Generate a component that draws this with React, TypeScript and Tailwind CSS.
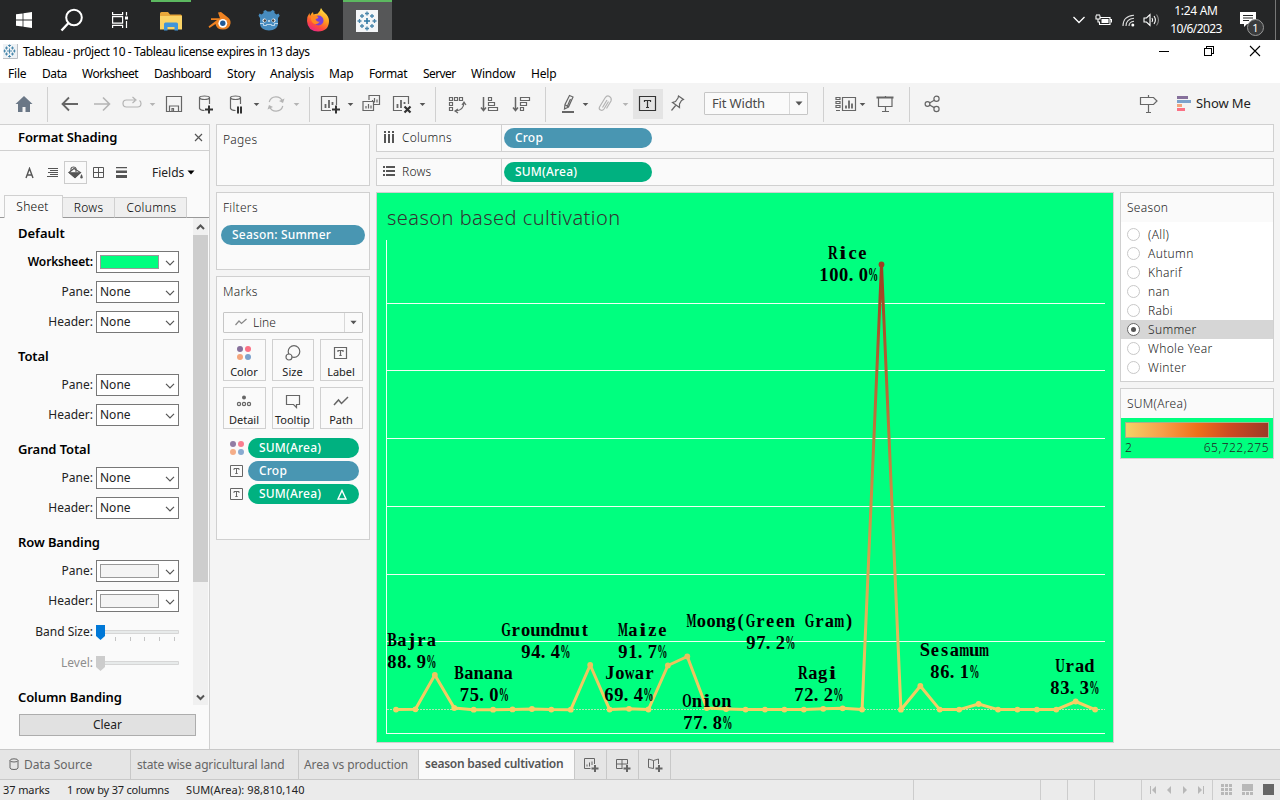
import React from "react";

type Kids = { children?: React.ReactNode };

const Ic = ({ cls = "", color = "text-[#666]", children }: Kids & { cls?: string; color?: string }) => (
  <svg viewBox="0 0 24 24" className={`mt-[9px] h-6 w-6 shrink-0 ${color} ${cls}`} fill="none" stroke="currentColor" strokeWidth="1.2">
    {children}
  </svg>
);

const Caret = ({ cls = "", color = "text-[#555]" }: { cls?: string; color?: string }) => (
  <svg viewBox="0 0 8 24" className={`mt-[9px] h-6 w-2 shrink-0 ${color} ${cls}`}>
    <path d="M1.700 11h5.600L4.500 14z" fill="currentColor" />
  </svg>
);

const Sep = ({ cls = "" }: { cls?: string }) => <div className={`mt-1 h-[35px] w-px shrink-0 bg-[#d0d0d0] ${cls}`} />;

const TableauMark = ({ size }: { size: string }) => (
  <svg viewBox="0 0 22 22" className={size}>
    <rect width="22" height="22" fill="#f4f6f8" />
    <g stroke="#4a86ab" strokeWidth="1.3">
      <path d="M11 8v6M8 11h6" strokeWidth="1.6" stroke="#2f77a3" />
      <path d="M11 1.500v4M9 3.500h4M11 16.500v4M9 18.500h4M3.500 9v4M1.500 11h4M18.500 9v4M16.500 11h4" />
      <path d="M6 4v4M4 6h4M16 4v4M14 6h4M6 14v4M4 16h4M16 14v4M14 16h4" />
    </g>
  </svg>
);

const SmallTableauMark = () => (
  <svg viewBox="0 0 15 15" className="h-[15px] w-[15px]">
    <path d="M0 0h14.500v14.500H0z" fill="#eef2f5" />
    <path d="M14.500 0v14.500H0" fill="none" stroke="#b9bec4" />
    <path d="M6.500 4.500v5M4 7h5M6.500 .500v2.500M5 1.500h3M6.500 11v2.500M5 12.500h3M1.500 5.500v3M.500 7H3M11.500 5.500v3M10 7h2.500M3.500 2.500v3M2 4h3M9.500 2.500v3M8 4h3M3.500 8.500v3M2 10h3M9.500 8.500v3M8 10h3" stroke="#3f81a8" strokeWidth="0.900" fill="none" />
  </svg>
);

const Slot = ({ cls = "", children }: Kids & { cls?: string }) => (
  <div className={`flex h-10 w-[49px] shrink-0 items-center justify-center ${cls}`}>{children}</div>
);

function Taskbar() {
  return (
    <div className="flex h-10 w-full shrink-0 bg-[#252627] text-white">
      <Slot cls="pr-[2px]">
        <svg viewBox="0 0 16 16" className="h-4 w-4" fill="#fff">
          <path d="M0 2.300 6.600 1.400V7.600H0zM7.400 1.300 16 0v7.600H7.400zM0 8.400h6.600v6.200L0 13.700zM7.400 8.400H16V16l-8.600-1.200z" />
        </svg>
      </Slot>
      <Slot cls="pr-1">
        <svg viewBox="0 0 24 24" className="h-6 w-6" fill="none" stroke="#fff" strokeWidth="2">
          <circle cx="14" cy="9.500" r="7.800" />
          <path d="M8.500 15 1.500 22.500" strokeWidth="2.400" />
        </svg>
      </Slot>
      <Slot cls="pr-[5px]">
        <svg viewBox="0 0 18 18" className="h-[18px] w-[18px]" fill="none" stroke="#fff" strokeWidth="1.200">
          <path d="M1.600 1v2.600h10V1M1.600 17v-2.600h10V17M1.600 5.600h10v6.600h-10zM15.500 1v3.500M15.500 10v7" />
          <path d="M14 5.500h3v3h-3z" fill="#fff" stroke="none" />
        </svg>
      </Slot>
      <Slot cls="flex-col pr-[2px]">
        <div className="h-[2px] w-10 bg-[#5cb860]" />
        <div className="flex flex-1 items-center">
          <svg viewBox="0 0 22 19" className="h-[19px] w-[22px]">
            <path d="M0 1.500Q0 0 1.500 0H8l2 2.500H20.500Q22 2.500 22 4V9H0z" fill="#e9a83a" />
            <path d="M0 4h22v13.500H0z" fill="#fbd467" />
            <path d="M4 18.500V12q0-1.500 1.500-1.500h11Q18 10.500 18 12v6.500h-3.500V15h-7v3.500z" fill="#3f95dc" />
          </svg>
        </div>
      </Slot>
      <Slot cls="pr-[2px]">
        <svg viewBox="0 0 24 20" className="mt-[2px] h-5 w-6">
          <path d="M10 1.500 13 1l7 5.500Q23 9 22.500 12.500 21.500 18.500 15 18.500 8.500 18.500 7.500 13L1.500 17 .500 15.500 9 9H3V7.300H12z" fill="#ee8222" />
          <circle cx="14.800" cy="12.300" r="4.400" fill="#fff" />
          <circle cx="14.800" cy="12.300" r="2.700" fill="#235a96" />
        </svg>
      </Slot>
      <Slot cls="pr-[2px]">
        <svg viewBox="0 0 22 22" className="h-[22px] w-[22px]">
          <path d="M7.500 1 9.500 2.500h3L14.500 1l2 1v2l2 1.500 2-1 1.200 2.200L20 9v6.500Q19 21 11 21.500 3 21 2 15.500V9L.500 6.700 1.500 4.500l2 1 2-1.500V2z" fill="#478cbf" />
          <path d="M2 14.500h3.500v2h3V15.500h5v1h3v-2H20" fill="none" stroke="#d8e8f4" strokeWidth="0.800" />
          <circle cx="6.500" cy="11.500" r="2" fill="#fff" />
          <circle cx="15.500" cy="11.500" r="2" fill="#fff" />
          <circle cx="6.800" cy="11.600" r="1.300" fill="#414042" />
          <circle cx="15.200" cy="11.600" r="1.300" fill="#414042" />
          <path d="M11 11v2" stroke="#fff" strokeWidth="1.200" />
        </svg>
      </Slot>
      <Slot cls="pr-[2px]">
        <svg viewBox="0 0 24 24" className="h-6 w-6">
          <defs>
            <linearGradient id="fx" x1="0.800" y1="0" x2="0.300" y2="1">
              <stop offset="0" stopColor="#ffe84a" />
              <stop offset="0.450" stopColor="#ff9a1f" />
              <stop offset="0.750" stopColor="#ff4a3c" />
              <stop offset="1" stopColor="#e8258a" />
            </linearGradient>
          </defs>
          <path d="M15 0q1.500 3 4 5 4 3.500 4 8 0 10-11 10.500Q1.500 23 1 13 1 8 3.500 5L4 8q1-2.500 3-4l.500 2.500q2-1 4-.800Q14 4 15 0z" fill="url(#fx)" />
          <circle cx="12.500" cy="12.500" r="5" fill="#7a3fd6" />
          <path d="M5 8.500q3-2 7.500.500-.500 2-3 2 1 3.500 4.500 2.500-3 4-6.500 2Q4.500 13.500 5 8.500z" fill="#ff8a22" />
        </svg>
      </Slot>
      <Slot cls="w-[48px] flex-col bg-[#565758]">
        <div className="h-[2px] w-full bg-[#5cb860]" />
        <div className="flex flex-1 items-center pr-px">
          <TableauMark size="h-[22px] w-[22px]" />
        </div>
      </Slot>
      <div className="ml-auto flex h-10 items-center">
        <svg viewBox="0 0 12 8" className="h-2 w-3" fill="none" stroke="#fff" strokeWidth="1.300">
          <path d="M.500 1 6 6.500 11.500 1" />
        </svg>
        <svg viewBox="0 0 17 12" className="ml-[10px] h-3 w-[17px]" fill="none" stroke="#fff" strokeWidth="1.100">
          <path d="M5.500 3.500h9.500v7H4.500V8M15.500 5.500h1v3M1 1.500v3.500h4V1.500M2 0v2M4 0v2M3 5v3h2" />
          <path d="M6.500 5h7v4h-7z" fill="#fff" stroke="none" />
        </svg>
        <svg viewBox="0 0 13 13" className="ml-[10px] h-[13px] w-[13px]" fill="none" stroke="#ddd" strokeWidth="1.100">
          <path d="M1 12Q1 2 12 1.200M4 12Q4 5 12 4.200M7 12Q7 8 12 7.300" />
          <circle cx="10.800" cy="11" r="1.500" fill="#fff" stroke="none" />
        </svg>
        <svg viewBox="0 0 17 14" className="ml-2 h-[14px] w-[17px]" fill="none" stroke="#fff" strokeWidth="1.100">
          <path d="M1 5h2.500L7 1.500v11L3.500 9H1zM9 5q1.300 2 0 4M11 3q2.800 4 0 8" />
          <path d="M13.500 1.500q4 5.500 0 11" stroke="#888" />
        </svg>
        <div className="ml-[7px] flex w-[58px] flex-col items-center whitespace-nowrap text-[12px] leading-[18px]">
          <span className="tracking-[-0.3px]">1:24 AM</span>
          <span className="tracking-[-0.6px]">10/6/2023</span>
        </div>
        <svg viewBox="0 0 26 26" className="ml-[14px] mt-2 h-[26px] w-[26px]">
          <path d="M1 1h16v12H8l-3 3v-3H1z" fill="#fff" />
          <path d="M4 4.500h10M4 7h10M4 9.500h6" stroke="#252627" />
          <circle cx="16.500" cy="16.500" r="8" fill="#3a3b3c" stroke="#999" />
          <text x="16.500" y="20.500" textAnchor="middle" fontSize="11" fill="#fff">1</text>
        </svg>
        <div className="ml-[10px] mr-1 h-10 w-px bg-[#777]" />
      </div>
    </div>
  );
}

function TitleBar() {
  return (
    <div className="flex h-[23px] w-full shrink-0 items-center bg-white pl-[3px] text-[12px] text-black">
      <SmallTableauMark />
      <span className="ml-[5px] whitespace-nowrap tracking-[-0.39px]">Tableau - pr0ject 10 - Tableau license expires in 13 days</span>
      <svg viewBox="0 0 102 12" className="-mt-[2px] ml-auto mr-[19px] h-3 w-[102px]" fill="none" stroke="#000" shapeRendering="crispEdges">
        <path d="M0 6.500h10M45.500 3.500h7v7h-7zM47.500 3V1.500h7v7H53" />
        <path d="M91 1l10 10M101 1 91 11" shapeRendering="auto" strokeWidth="1.100" />
      </svg>
    </div>
  );
}

function MenuBar() {
  return (
    <div className="flex h-5 w-full shrink-0 items-center bg-white pl-2 pt-[2px] text-[12px] tracking-[-0.2px] text-black">
      <span className="w-[34px]">File</span>
      <span className="w-[40px] tracking-[-0.4px]">Data</span>
      <span className="w-[72px] tracking-[-0.5px]">Worksheet</span>
      <span className="w-[73px] tracking-[-0.55px]">Dashboard</span>
      <span className="w-[43px]">Story</span>
      <span className="w-[59px]">Analysis</span>
      <span className="w-[40px]">Map</span>
      <span className="w-[54px] tracking-[-0.45px]">Format</span>
      <span className="w-[48px] tracking-[-0.6px]">Server</span>
      <span className="w-[60px]">Window</span>
      <span>Help</span>
    </div>
  );
}

const TBox = () => (
  <>
    <path d="M3.500 4.500h16v14h-16z" />
    <path d="M8.500 10V8.500h6V10M11.500 8.500v7M10 15.500h3" />
  </>
);

function Toolbar() {
  return (
    <div className="flex h-[41px] w-full shrink-0 items-start bg-[#f4f4f4]">
      <Ic cls="ml-3">
        <path d="M12 4 3.500 12H6v8h4.500v-5h3v5H18v-8h2.500z" fill="#6a7786" stroke="none" />
      </Ic>
      <Sep cls="ml-[11px]" />
      <Ic cls="ml-[10px]"><path d="M20 12H5M11 5.500 4.500 12l6.500 6.500" strokeWidth="1.800" /></Ic>
      <Ic cls="ml-2" color="text-[#b4b4b4]"><path d="M4 12h15M13 5.500 19.500 12 13 18.500" strokeWidth="1.600" /></Ic>
      <Ic cls="ml-[6px]" color="text-[#b4b4b4]">
        <path d="M15 8H6.500Q3 8 3 11.500T6.500 15h11q3.500 0 3.500-3.500 0-2-1.500-3M12.500 5l3.500 3-3.500 3" />
      </Ic>
      <Caret cls="ml-1" color="text-[#b4b4b4]" />
      <Ic cls="ml-[6px]"><path d="M4.500 4.500h15v15h-15zM7.500 19v-5h9v5M10 19v-2.500h1.500V19" /></Ic>
      <Ic cls="ml-2">
        <path d="M5.500 5.500v11q1 2 5 2M15.500 5.500V12M5.500 5.500Q6 4 10.500 4t5 1.500Q15 7.500 10.500 7.500t-5-2z" />
        <path d="M15 13.500v8M11 17.500h8" strokeWidth="2" stroke="#333" />
      </Ic>
      <Ic cls="ml-[7px]">
        <path d="M5.500 5.500v11q1 2 5 2M15.500 5.500V12M5.500 5.500Q6 4 10.500 4t5 1.500Q15 7.500 10.500 7.500t-5-2z" />
        <path d="M13 14.500v7M16 14.500v7" strokeWidth="2" stroke="#333" />
      </Ic>
      <Caret cls="ml-[3px]" />
      <Ic cls="ml-1" color="text-[#b4b4b4]">
        <path d="M5.200 10A7 7 0 0 1 18.500 9.500M18.800 14A7 7 0 0 1 5.500 14.500" />
        <path d="M20.500 6.500 19 11l-4-2zM3.500 17.500 5 13l4 2z" fill="currentColor" stroke="none" />
      </Ic>
      <Caret cls="ml-1" color="text-[#b4b4b4]" />
      <Sep cls="ml-[9px]" />
      <Ic cls="ml-2">
        <path d="M13 18.500H3.500v-14h15V13" />
        <path d="M7.500 16v-4M11 16V8M14.500 13v-3" strokeWidth="1.800" />
        <path d="M18 13.500v8M14 17.500h8" strokeWidth="2" stroke="#333" />
      </Ic>
      <Caret cls="ml-1" />
      <Ic cls="ml-[5px]">
        <path d="M10 8V3.500h10.500v9H15M4 9.500h10.500v9H4z" />
        <path d="M7 16.500V14M9.500 16.500V12M12 16.500v-3M13.500 10V8M15.500 10.500V6M18 10.500v-3" />
      </Ic>
      <Ic cls="ml-[7px]">
        <path d="M12 18.500H3.500v-14h15V12" />
        <path d="M7.500 16v-4M11 16V8M14.500 12v-2" strokeWidth="1.800" />
        <path d="M14.500 14.500l6 6M20.500 14.500l-6 6" strokeWidth="2.200" stroke="#333" />
      </Ic>
      <Caret cls="ml-1" />
      <Sep cls="ml-[9px]" />
      <Ic cls="ml-[9px]">
        <path d="M4.500 5.500h3v3h-3zM9.500 5.500h3v3h-3zM14.500 5.500h3v3h-3zM4.500 10.500h3v3h-3zM4.500 15.500h3v3h-3z" />
        <path d="M11 19q7.500-1 8-8M17 13l2-3 2 3M13 17l-3 2 3 2" />
      </Ic>
      <Ic cls="ml-[9px]">
        <path d="M5.500 5v13M3 15.500l2.500 3 2.500-3" strokeWidth="1.500" />
        <path d="M10.500 5.500h3v3h-3zM10.500 10.500h6v3h-6zM10.500 15.500h9v3h-9z" />
      </Ic>
      <Ic cls="ml-2">
        <path d="M5.500 5v13M3 15.500l2.500 3 2.500-3" strokeWidth="1.500" />
        <path d="M10.500 5.500h9v3h-9zM10.500 10.500h6v3h-6zM10.500 15.500h3v3h-3z" />
      </Ic>
      <Sep cls="ml-[11px]" />
      <Ic cls="ml-[10px]">
        <path d="M13.500 3.500 17 5l-4.500 10-4 2 .500-4.500zM9.500 13l3.500 2M11 15l3.500-8" />
        <path d="M6 20h12" strokeWidth="2" />
      </Ic>
      <Caret cls="ml-px" />
      <Ic cls="ml-1" color="text-[#b4b4b4]">
        <path d="M15.500 9.500 11 17q-1.500 2-3.500 1T6.500 15L12 6q2-3 4.500-1.500T18 9l-4.500 7.500M14 8l-4.500 7.500" />
      </Ic>
      <Caret cls="ml-1" color="text-[#b4b4b4]" />
      <div className="ml-1 mt-[6px] flex h-[30px] w-[30px] shrink-0 justify-center bg-[#e4e4e4]">
        <svg viewBox="0 0 24 24" className="mt-[3px] h-6 w-6" fill="none" stroke="#333" strokeWidth="1.200"><TBox /></svg>
      </div>
      <Ic cls="ml-[2px]">
        <path d="M13.500 4l5 3.500-2 1-2 3.500 0 3.500-7-5 3-1 2.500-3.500zM11 13 6.500 18.500" />
      </Ic>
      <div className="ml-[15px] mt-[9px] flex h-[23px] w-[104px] shrink-0 rounded-[1px] border border-[#c6c6c6] bg-[#fafafa] text-[13px] leading-[21px] text-[#4a4a4a]">
        <span className="flex-1 pl-[7px] tracking-[-0.15px]">Fit Width</span>
        <div className="flex w-[18px] items-center justify-center border-l border-[#d8d8d8]">
          <svg viewBox="0 0 8 5" className="h-[5px] w-2"><path d="M0.500 0.500h7L4 4.500z" fill="#555" /></svg>
        </div>
      </div>
      <Sep cls="ml-[15px]" />
      <Ic cls="ml-[9px]">
        <path d="M3 5.500h4v2H3zM3 9.500h4v2H3zM3 13.500h4v2H3zM3 18.500h4M9.500 5.500h13v13h-13z" />
        <path d="M13 16.500v-3M16 16.500v-8M19 16.500v-5" strokeWidth="1.800" />
      </Ic>
      <Caret cls="ml-px" />
      <Ic cls="ml-[7px]">
        <path d="M3.500 5.500h17" strokeWidth="2" />
        <path d="M5.500 6v8.500h13.500V6M12.500 15v4M9 19.500h7M12.500 4v1" />
      </Ic>
      <Sep cls="ml-3" />
      <Ic cls="ml-[10px]">
        <circle cx="7.500" cy="12" r="2.400" /><circle cx="16.500" cy="6.800" r="2.600" /><circle cx="16.500" cy="17" r="2.600" />
        <path d="M9.500 11l4.800-2.800M9.500 13l4.800 2.600" />
      </Ic>
      <Ic cls="ml-auto">
        <path d="M4.500 5.500h13l3.500 3.500-3.500 3.500h-13zM12.500 3v2.500M12.500 12.500V20M10 20.500h5" />
      </Ic>
      <svg viewBox="0 0 16 16" className="ml-[16px] mt-[13px] h-4 w-4 shrink-0">
        <path d="M1 0h11v3H1z" fill="#86709b" /><path d="M1 4h14v3H1z" fill="#7ca2cc" />
        <path d="M1 8h5v3H1z" fill="#f2a57c" /><path d="M1 12h8v3H1z" fill="#fb7185" />
      </svg>
      <span className="ml-1 mt-[10px] w-[84px] text-[13px] leading-[21px] tracking-[-0.1px] text-[#222]">Show Me</span>
    </div>
  );
}

const Combo = ({ fill }: { fill?: string }) => (
  <div className="flex h-[22px] w-[83px] items-center border border-[#777] bg-white pl-[3px] text-[12px] text-[#222]">
    {fill ? <div className={`h-[14px] w-[59px] border border-[#999] ${fill}`} /> : <span className="w-[59px]">None</span>}
    <svg viewBox="0 0 10 6" className="ml-[6px] mt-px h-[6px] w-[10px]" fill="none" stroke="#555" strokeWidth="1.200">
      <path d="M1 .800 5 4.800 9 .800" />
    </svg>
  </div>
);

const Field = ({ label, fill, bold = "" }: { label: string; fill?: string; bold?: string }) => (
  <div className="flex h-[30px] shrink-0 items-center">
    <span className={`w-[93px] text-right text-[12px] ${bold}`}>{label}</span>
    <div className="ml-[3px]"><Combo fill={fill} /></div>
  </div>
);

const Head = ({ children }: Kids) => (
  <div className="flex h-[33px] shrink-0 items-center pl-[18px] pt-[7px] text-[13px] font-semibold tracking-[-0.1px] text-black">{children}</div>
);

function FormatPane() {
  return (
    <div className="flex h-full w-[210px] shrink-0 flex-col border-r border-t border-[#d0d0d0] bg-[#fafafa] text-[#222]">
      <div className="flex h-[26px] shrink-0 items-center justify-between border-b border-[#d0d0d0] pl-[18px] pr-[6px]">
        <span className="text-[13px] font-semibold tracking-[-0.1px] text-black">Format Shading</span>
        <svg viewBox="0 0 9 9" className="-mt-px h-[9px] w-[9px]" stroke="#555" strokeWidth="1.200"><path d="M1 1l7 7M8 1 1 8" /></svg>
      </div>
      <div className="flex h-[44px] shrink-0 items-center pb-px pl-[24px]">
        <svg viewBox="0 0 11 12" className="h-3 w-[11px]" fill="none" stroke="#555" strokeWidth="1.400"><path d="M2 11 5.500 1.500 9 11M3.200 8h4.600" /></svg>
        <svg viewBox="0 0 11 11" className="ml-[12px] h-[11px] w-[11px]" stroke="#555"><path d="M1 1.500h10M3 3.500h8M1 5.500h10M3 7.500h8M0 9.500h11" /></svg>
        <div className="ml-[6px] flex h-[23px] w-[23px] items-center justify-center border border-[#ccc]">
          <svg viewBox="0 0 15 14" className="h-[14px] w-[15px]" fill="none" stroke="#555" strokeWidth="1.100">
            <path d="M1 6.500 6 2.500l6.500 4-5.500 5z" /><path d="M1.500 6.800h10.500L7 11.500z" fill="#555" />
            <path d="M3 5V2.500Q3.500 1 5.500 1T8 2.500V6" /><path d="M13.500 8q2.300 4 0 4.500-2.300-.500 0-4.500z" fill="#555" stroke="none" />
          </svg>
        </div>
        <svg viewBox="0 0 11 11" className="ml-[6px] h-[11px] w-[11px]" fill="none" stroke="#555"><path d="M.500.500h10v10H.500zM5.500 0v11M0 5.500h11" /></svg>
        <svg viewBox="0 0 11 11" className="ml-[12px] h-[11px] w-[11px]" fill="#555"><path d="M0 0h11v1.200H0zM0 3.500h11v2.500H0zM0 8h11v3H0z" /></svg>
        <span className="ml-[25px] w-[32px] whitespace-nowrap text-[12px]">Fields</span>
        <svg viewBox="0 0 8 5" className="ml-[3px] h-[5px] w-2"><path d="M.500.500h7L4 4.500z" fill="#000" /></svg>
      </div>
      <div className="flex h-[23px] shrink-0 items-end text-[12px] font-light text-black">
        <div className="h-full w-1 border-b border-[#999]" />
        <div className="flex h-full w-[59px] items-center justify-center border-x border-t border-[#d0d0d0] pr-[2px] tracking-[0.25px]">Sheet</div>
        <div className="flex h-[21px] w-[52px] items-center justify-center border-b border-r border-t border-[#d0d0d0] border-b-[#999] bg-[#efefef] tracking-[0.3px]">Rows</div>
        <div className="flex h-[21px] w-[72px] items-center justify-center border-b border-r border-t border-[#d0d0d0] border-b-[#999] bg-[#efefef] pl-[2px] tracking-[0.3px]">Columns</div>
        <div className="h-full flex-1 border-b border-[#999]" />
      </div>
      <div className="flex h-[487px] shrink-0 overflow-hidden">
        <div className="flex w-[193px] flex-col overflow-hidden">
          <div className="flex h-[29px] shrink-0 items-center pl-[18px] pt-[2px] text-[13px] font-semibold text-black">Default</div>
          <Field label="Worksheet:" fill="bg-[#00ff7f]" bold="font-semibold text-black tracking-[-0.15px]" />
          <Field label="Pane:" /><Field label="Header:" />
          <Head>Total</Head>
          <Field label="Pane:" /><Field label="Header:" />
          <Head>Grand Total</Head>
          <Field label="Pane:" /><Field label="Header:" />
          <Head>Row Banding</Head>
          <Field label="Pane:" fill="bg-[#f4f4f4]" /><Field label="Header:" fill="bg-[#f4f4f4]" />
          <div className="flex h-[31px] shrink-0 items-center">
            <span className="w-[93px] text-right text-[12px]">Band Size:</span>
            <svg viewBox="0 0 83 17" className="ml-[3px] mt-[2px] h-[17px] w-[83px]">
              <path d="M1 6.500h81.500v3H1z" fill="#e7eaea" stroke="#d6d6d6" />
              <path d="M19.500 13v4M34.500 13v4M48.500 13v4M63.500 13v4M78.500 13v4" stroke="#c4c4c4" />
              <path d="M0 1h9v11l-4.500 4L0 12z" fill="#0078d7" />
            </svg>
          </div>
          <div className="flex h-[31px] shrink-0 items-center text-[#8d8d8d]">
            <span className="w-[93px] text-right text-[12px]">Level:</span>
            <svg viewBox="0 0 83 17" className="ml-[3px] mt-[2px] h-[17px] w-[83px]">
              <path d="M1 6.500h81.500v3H1z" fill="#e7eaea" stroke="#d6d6d6" />
              <path d="M0 1h9v11l-4.500 4L0 12z" fill="#ccc" />
            </svg>
          </div>
          <Head>Column Banding</Head>
        </div>
        <div className="flex w-[15px] flex-col items-center bg-[#f0f0f0]">
          <svg viewBox="0 0 9 17" className="h-[17px] w-[9px]" fill="none" stroke="#555" strokeWidth="2"><path d="M1 11 4.500 7.500 8 11" /></svg>
          <div className="h-[347px] w-full bg-[#cdcdcd]" />
          <svg viewBox="0 0 9 17" className="mt-auto h-[17px] w-[9px]" fill="none" stroke="#555" strokeWidth="2"><path d="M1 7.500 4.500 11 8 7.500" /></svg>
        </div>
      </div>
      <div className="ml-[19px] mt-[9px] flex h-[22px] w-[177px] shrink-0 items-center justify-center border border-[#adadad] bg-[#e1e1e1] text-[12px]">Clear</div>
    </div>
  );
}

const Pill = ({ cls, children }: Kids & { cls: string }) => (
  <div className={`flex h-5 shrink-0 items-center rounded-full pl-[11px] text-[12px] font-medium tracking-[0.2px] text-white ${cls}`}>{children}</div>
);

const MarkBtn = ({ label, cls = "w-[43px]", children }: Kids & { label: string; cls?: string }) => (
  <div className={`flex h-[42px] shrink-0 flex-col items-center border border-[#d0d0d0] bg-[#fafafa] pr-px text-[11px] text-[#222] ${cls}`}>
    <svg viewBox="0 0 16 16" className="mt-[5px] h-4 w-4 shrink-0" fill="none" stroke="#666" strokeWidth="1.200">{children}</svg>
    <span className="mt-[4px] whitespace-nowrap leading-[14px]">{label}</span>
  </div>
);

const Dots = () => (
  <g stroke="none">
    <circle cx="4" cy="4" r="3" fill="#86709b" /><circle cx="12" cy="4" r="3" fill="#fb7185" />
    <circle cx="4" cy="12" r="3" fill="#f4a57c" /><circle cx="12" cy="12" r="3" fill="#7ca2cc" />
  </g>
);

const SmallT = () => <path d="M1.500 2.500h12v11h-12zM5 7V5.500h5V7M7.500 5.500v5M6.300 10.500h2.400" />;

const card = "flex shrink-0 flex-col border border-[#d0d0d0] bg-[#fafafa]";
const cardTitle = "pl-[6px] pt-[6px] text-[12px] leading-[18px] font-light tracking-[0.3px] text-[#222]";

function Cards() {
  return (
    <div className="ml-[6px] flex w-[154px] shrink-0 flex-col gap-[6px]">
      <div className={`${card} h-[62px]`}><span className={cardTitle}>Pages</span></div>
      <div className={`${card} h-[78px]`}>
        <span className={cardTitle}>Filters</span>
        <Pill cls="ml-1 mt-2 w-[144px] bg-[#4996b2]">Season: Summer</Pill>
      </div>
      <div className={`${card} h-[264px] pl-[6px]`}>
        <span className="pt-[6px] text-[12px] font-light leading-[18px] tracking-[0.3px] text-[#222]">Marks</span>
        <div className="mt-[11px] flex h-[21px] w-[140px] shrink-0 items-center rounded-[1px] border border-[#c6c6c6] bg-[#fafafa] text-[12px] font-light text-[#222]">
          <svg viewBox="0 0 12 8" className="-mt-[2px] ml-[11px] h-2 w-3" fill="none" stroke="#888" strokeWidth="1.200"><path d="M.500 7 4 3l2.500 2.500L11.500 1" /></svg>
          <span className="ml-[6px] flex-1">Line</span>
          <div className="flex h-full w-[18px] items-center justify-center border-l border-[#d8d8d8]">
            <svg viewBox="0 0 8 5" className="h-[5px] w-[7px]"><path d="M.500.500h7L4 4.500z" fill="#555" /></svg>
          </div>
        </div>
        <div className="mt-[6px] flex gap-[6px]">
          <MarkBtn label="Color"><Dots /></MarkBtn>
          <MarkBtn label="Size" cls="w-[42px]"><circle cx="9" cy="6.500" r="5.800" /><circle cx="4" cy="12" r="3" fill="#fafafa" /></MarkBtn>
          <MarkBtn label="Label"><SmallT /></MarkBtn>
        </div>
        <div className="mt-[6px] flex gap-[6px]">
          <MarkBtn label="Detail"><circle cx="8" cy="4.500" r="2" fill="#666" stroke="none" /><circle cx="3" cy="11" r="1.600" /><circle cx="8" cy="11" r="1.600" /><circle cx="13" cy="11" r="1.600" /></MarkBtn>
          <MarkBtn label="Tooltip" cls="w-[42px]"><path d="M1.500 2.500h13v9h-3v3l-3-3h-7z" /></MarkBtn>
          <MarkBtn label="Path"><path d="M1 12 5.500 7l3 3.500L15 4" strokeWidth="1.500" /></MarkBtn>
        </div>
        <div className="mt-[9px] flex flex-col gap-[3px] pl-[6px]">
          <div className="flex items-center"><svg viewBox="0 0 16 16" className="h-4 w-4" opacity="0.900"><Dots /></svg><Pill cls="ml-[3px] w-[111px] bg-[#00b180]">SUM(Area)</Pill></div>
          <div className="flex items-center"><svg viewBox="0 0 16 16" className="h-4 w-4" fill="none" stroke="#666"><SmallT /></svg><Pill cls="ml-[3px] w-[111px] bg-[#4996b2]">Crop</Pill></div>
          <div className="flex items-center">
            <svg viewBox="0 0 16 16" className="h-4 w-4" fill="none" stroke="#666"><SmallT /></svg>
            <Pill cls="ml-[3px] w-[111px] justify-between bg-[#00b180] pr-3">
              SUM(Area)
              <svg viewBox="0 0 10 11" className="h-[11px] w-[10px]" fill="none" stroke="#fff" strokeWidth="1.400"><path d="M1 10 5 1.500 9 10z" /></svg>
            </Pill>
          </div>
        </div>
      </div>
    </div>
  );
}

const Shelf = ({ label, pill, icon, tone }: { label: string; pill: string; icon: React.ReactNode; tone: string }) => (
  <div className="flex h-7 shrink-0 items-center border border-[#d0d0d0] bg-[#fafafa]">
    <div className="flex h-full w-[125px] items-center border-r border-[#d0d0d0] pl-[6px] text-[12px] font-light tracking-[0.25px] text-[#222]">
      <svg viewBox="0 0 12 12" className="-mt-[2px] h-3 w-3" fill="#555">{icon}</svg>
      <span className="ml-[7px]">{label}</span>
    </div>
    <Pill cls={`ml-[2px] w-[148px] ${tone}`}>{pill}</Pill>
  </div>
);

const ys = [
  709.6, 709.3, 675, 708, 709.7, 709.7, 709.4, 709, 709.6, 709.7, 665, 709.6, 708.8, 709.5, 665.5, 656.5, 708, 709, 709.6,
  709.6, 709.6, 709.6, 708.8, 708.3, 709.6, 264.5, 709.7, 686, 709.6, 709.6, 704, 709.6, 709.6, 709.6, 709.6, 701.5, 709.6,
];
const px = (i: number) => 396 + i * 19.42;

const labels: [string, number, number][] = [
  ["Bajra", 387, 646], ["88.9%", 387, 668], ["Banana", 454, 679], ["75.0%", 459.5, 701],
  ["Groundnut", 501, 636], ["94.4%", 521, 658], ["Maize", 618, 636], ["91.7%", 618, 658],
  ["Jowar", 605, 679], ["69.4%", 604, 701], ["Moong(Green Gram)", 686.5, 627], ["97.2%", 746, 649],
  ["Onion", 682, 707], ["77.8%", 683, 729], ["Rice", 828, 259], ["100.0%", 819, 281],
  ["Ragi", 798, 679], ["72.2%", 794, 701], ["Sesamum", 920, 656], ["86.1%", 930, 678],
  ["Urad", 1055, 672], ["83.3%", 1050, 694],
];

const cell = 9.85;
const stretched: Record<string, number> = { m: 10, M: 10, G: 9.6, O: 9.4, U: 9.6, R: 9.8, "%": 10.2, w: 9.8, i: 7, r: 8.4, j: 7, B: 9.6 };

const MonoLabel = ({ text, x, y }: { text: string; x: number; y: number }) => (
  <text y={y} textAnchor="middle">
    {text.split("").map((c, i) => {
      const cx = x + cell / 2 + i * cell - (c === "." ? 2.500 : 0);
      const w = stretched[c];
      return w ? (
        <tspan key={i} x={cx} textLength={w} lengthAdjust="spacingAndGlyphs">{c}</tspan>
      ) : (
        <tspan key={i} x={cx}>{c}</tspan>
      );
    })}
  </text>
);

function Chart() {
  return (
    <div className="flex h-[551px] w-[738px] shrink-0 flex-col border border-[#d0d0d0] bg-[#00ff7f]">
      <div className="h-[46px] shrink-0 pl-[10px] pt-[11px] text-[20px] font-light leading-[28px] tracking-[0.46px] text-[#333]">season based cultivation</div>
      <svg viewBox="377 239 736 503" className="h-[503px] w-[736px] overflow-visible">
        <defs>
          <linearGradient id="heat" gradientUnits="userSpaceOnUse" x1="0" y1="264" x2="0" y2="709">
            <stop offset="0" stopColor="#9e3d22" />
            <stop offset="1" stopColor="#f4d166" />
          </linearGradient>
        </defs>
        <path d="M386 303.500h719M386 370.500h719M386 438.500h719M386 506.500h719M386 574.500h719M386 641.500h719M386.500 240v493.500M386 733.500h719" stroke="#f0fff4" fill="none" />
        <path d="M387 709.500h718" stroke="#b5e8b0" strokeDasharray="2 1" />
        <polyline points={ys.map((y, i) => `${px(i)},${y}`).join(" ")} fill="none" stroke="url(#heat)" strokeWidth="3" strokeLinejoin="round" />
        {ys.map((y, i) => <circle key={i} cx={px(i)} cy={y} r="2.900" fill="url(#heat)" />)}
        <g fill="#000" fontSize="18.500" fontWeight="bold" fontFamily='"Liberation Serif", serif'>
          {labels.map(([t, x, y], i) => <MonoLabel key={i} text={t} x={x} y={y} />)}
        </g>
      </svg>
    </div>
  );
}

function Legends() {
  const seasons = ["(All)", "Autumn", "Kharif", "nan", "Rabi", "Summer", "Whole Year", "Winter"];
  return (
    <div className="flex w-[154px] shrink-0 flex-col gap-[6px]">
      <div className={`${card} h-[190px]`}>
        <span className={`${cardTitle} h-[29px] shrink-0`}>Season</span>
        <div className="flex flex-1 flex-col bg-white pt-[3px]">
          {seasons.map((s) => (
            <div key={s} className={`flex h-[19px] items-center pl-[6px] text-[12px] font-light tracking-[0.35px] text-[#222] ${s === "Summer" ? "bg-[#d6d6d6]" : ""}`}>
              <div className={`flex h-[13px] w-[13px] items-center justify-center rounded-full border bg-white ${s === "Summer" ? "border-[#666]" : "border-[#c8c8c8]"}`}>
                {s === "Summer" && <div className="h-[5px] w-[5px] rounded-full bg-[#555]" />}
              </div>
              <span className="ml-2">{s}</span>
            </div>
          ))}
        </div>
      </div>
      <div className={`${card} h-[71px]`}>
        <span className={`${cardTitle} h-[29px] shrink-0`}>SUM(Area)</span>
        <div className="flex flex-1 flex-col bg-[#00ff7f] px-1 pt-[4px]">
          <div className="h-4 border border-[#a5b08a] bg-[linear-gradient(to_right,#f4d166,#f8a04a_25%,#ef701b_50%,#cf4c22_72%,#9e3a26)]" />
          <div className="flex justify-between text-[12px] font-light leading-[19px] tracking-[0.5px] text-[#222]"><span>2</span><span>65,722,275</span></div>
        </div>
      </div>
    </div>
  );
}

const AddTab = ({ children }: Kids) => (
  <div className="flex h-full w-8 shrink-0 items-center justify-center border-r border-[#c8c8c8]">
    <svg viewBox="0 0 16 16" className="h-4 w-4" fill="none" stroke="#666">
      {children}
      <path d="M12 8v7M8.500 11.500h7" strokeWidth="2" />
    </svg>
  </div>
);

function SheetTabs() {
  return (
    <div className="flex h-[31px] w-full shrink-0 border-y border-[#c8c8c8] bg-[#e5e5e5] text-[12px] text-[#666]">
      <div className="flex w-[131px] shrink-0 items-center border-r border-[#c8c8c8] pl-[9px]">
        <svg viewBox="0 0 10 12" className="-mt-[2px] h-3 w-[10px]" fill="none" stroke="#666"><path d="M1 2.500v7.500q0 1.500 4 1.500t4-1.500V2.500M1 2.500Q1 .800 5 .800t4 1.700Q9 4 5 4T1 2.500z" /></svg>
        <span className="ml-[5px]">Data Source</span>
      </div>
      <div className="flex w-[168px] shrink-0 items-center whitespace-nowrap border-r border-[#c8c8c8] pl-[6px] tracking-[-0.15px]">state wise agricultural land</div>
      <div className="flex w-[120px] shrink-0 items-center whitespace-nowrap border-r border-[#c8c8c8] pl-[5px] tracking-[-0.1px]">Area vs production</div>
      <div className="flex w-[156px] shrink-0 items-center whitespace-nowrap border-r border-[#c8c8c8] bg-[#fafafa] pb-[2px] pl-[6px] font-semibold tracking-[-0.25px] text-[#555]">season based cultivation</div>
      <AddTab><path d="M7.500 11.500h-6v-10h10V7M4 9.500V7.500M6.500 9.500V5.500M9 8V4.500" /></AddTab>
      <AddTab><path d="M7.500 11.500h-6v-9h11V7M7 2.500v9M1.500 7h11" /></AddTab>
      <AddTab><path d="M6.500 3.500v8M6.500 11.500l-5-1v-8.500l5 1.500 5-1.500V7" /></AddTab>
    </div>
  );
}

function StatusBar() {
  return (
    <div className="flex h-5 w-full shrink-0 items-center bg-[#ebebeb] text-[11px] text-[#222]">
      <span className="ml-[3px] w-[64px] whitespace-nowrap tracking-[-0.1px]">37 marks</span>
      <span className="w-[119px] whitespace-nowrap tracking-[-0.2px]">1 row by 37 columns</span>
      <span className="whitespace-nowrap tracking-[0.1px]">SUM(Area): 98,810,140</span>
      <div className="ml-auto flex h-full items-center">
        <div className="h-full w-px bg-[#ccc]" />
        <div className="ml-[126px] h-full w-px bg-[#ccc]" />
        <div className="ml-[26px] h-full w-px bg-[#ccc]" />
        <div className="ml-[26px] h-full w-px bg-[#ccc]" />
        <div className="ml-[46px] h-full w-px bg-[#ccc]" />
        <svg viewBox="0 0 56 8" className="ml-[7px] h-2 w-14" fill="#b8b8b8">
          <path d="M1 0h1v8H1zM7 0v8L3 4zM22 0v8l-4-4zM34 0v8l4-4zM49 0v8l4-4zM54 0h1v8h-1z" />
        </svg>
        <div className="ml-[7px] h-full w-px bg-[#ccc]" />
        <svg viewBox="0 0 53 11" className="-mt-px ml-2 mr-[6px] h-[11px] w-[53px]" fill="#b8b8b8">
          <path d="M0 0h3v3H0zM4 0h3v3H4zM8 0h3v3H8zM0 4h3v3H0zM4 4h3v3H4zM8 4h3v3H8zM0 8h3v3H0zM4 8h3v3H4zM8 8h3v3H8zM21 0h11v7H21zM21 8h3v3h-3zM25 8h3v3h-3zM29 8h3v3h-3z" />
          <path d="M42 0h11v11H42z" fill="#666" />
        </svg>
      </div>
    </div>
  );
}

export default function App() {
  return (
    <div className='flex h-[800px] w-[1280px] flex-col overflow-hidden bg-[#f4f4f4] font-["Noto_Sans",sans-serif]'>
      <Taskbar />
      <TitleBar />
      <MenuBar />
      <Toolbar />
      <div className="flex h-[625px] w-full shrink-0">
        <FormatPane />
        <Cards />
        <div className="ml-[6px] flex w-[898px] shrink-0 flex-col gap-[6px]">
          <Shelf label="Columns" pill="Crop" tone="bg-[#4996b2]" icon={<path d="M1 0h2v2H1zM5 0h2v2H5zM9 0h2v2H9zM1 3h2v9H1zM5 3h2v9H5zM9 3h2v9H9z" />} />
          <Shelf label="Rows" pill="SUM(Area)" tone="bg-[#00b180]" icon={<path d="M0 1h2v2H0zM0 5h2v2H0zM0 9h2v2H0zM3 1h9v2H3zM3 5h9v2H3zM3 9h9v2H3z" />} />
          <div className="flex gap-[6px]">
            <Chart />
            <Legends />
          </div>
        </div>
      </div>
      <SheetTabs />
      <StatusBar />
    </div>
  );
}
